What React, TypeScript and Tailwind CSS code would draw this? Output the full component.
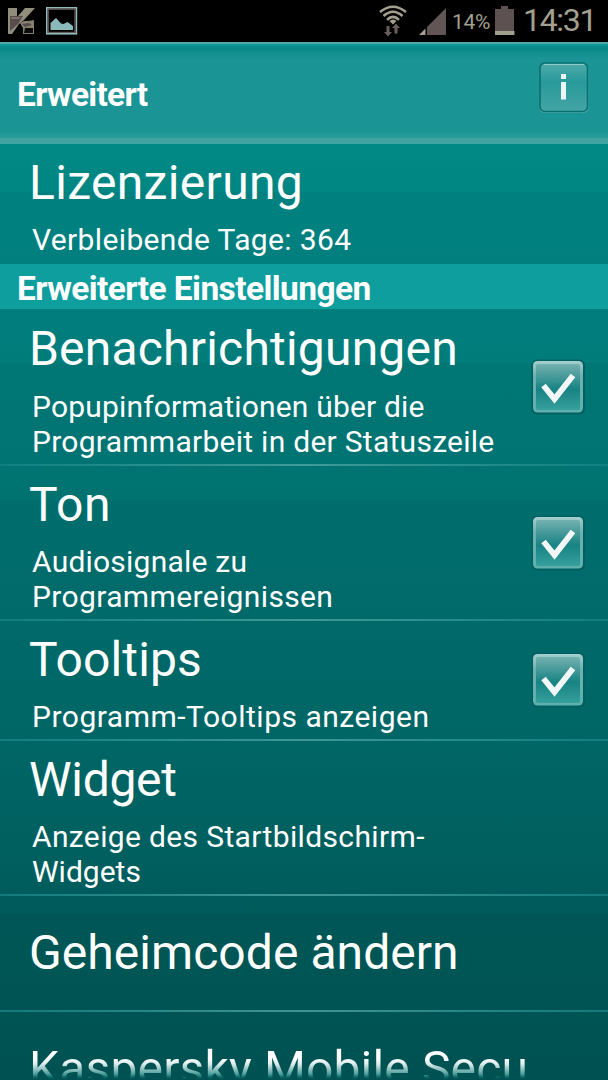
interface Line {
  text: string
  className: string
}

interface Setting {
  title: Line
  summary: Line[]
  rowClass: string
  titlePad: string
  checked?: boolean
}

const settings: Setting[] = [
  {
    title: { text: 'Benachrichtigungen', className: 'tracking-[0.2px]' },
    summary: [
      { text: 'Popupinformationen über die', className: 'tracking-[0.17px]' },
      { text: 'Programmarbeit in der Statuszeile', className: 'tracking-[0.27px]' },
    ],
    rowClass: 'h-[157px]',
    titlePad: 'pt-[12px] gap-[12px]',
    checked: true,
  },
  {
    title: { text: 'Ton', className: 'tracking-[0.6px]' },
    summary: [
      { text: 'Audiosignale zu', className: 'tracking-[0.22px]' },
      { text: 'Programmereignissen', className: 'tracking-[0.36px]' },
    ],
    rowClass: 'h-[155px]',
    titlePad: 'pt-[11px] gap-[11px]',
    checked: true,
  },
  {
    title: { text: 'Tooltips', className: 'tracking-[0.15px]' },
    summary: [{ text: 'Programm-Tooltips anzeigen', className: 'tracking-[0.5px]' }],
    rowClass: 'h-[120px]',
    titlePad: 'pt-[11px] gap-[11px]',
    checked: true,
  },
  {
    title: { text: 'Widget', className: 'tracking-[-0.3px]' },
    summary: [
      { text: 'Anzeige des Startbildschirm-', className: 'tracking-[0.36px]' },
      { text: 'Widgets', className: 'tracking-normal' },
    ],
    rowClass: 'h-[155px]',
    titlePad: 'pt-[11px] gap-[11px]',
  },
]

function StatusBar() {
  return (
    <div className="flex h-[42px] shrink-0 items-start bg-black text-[#a3a08f]">
      {/* Antivirus notification */}
      <svg className="mt-[7px] ml-2 h-7 w-7" viewBox="0 0 28 28">
        <path d="M0 1h9v8h1l7-8h10L16 13l-5 4-7 10H0z" fill="#918d7c" />
        <path d="M2 9h13l-5 8-8 7z" fill="#574c4c" />
        <path d="M3 10h10l-2 2H3z" fill="#7b7369" />
        <path d="M12 16l4-2h4l6-1v14H15v-6z" fill="#857f70" />
        <path d="M14 17l7-1 3 2-7 2z" fill="#574c4c" />
        <path d="M17 21h8v5h-9z" fill="#0c0a0a" />
      </svg>
      {/* Picture notification */}
      <svg className="mt-[7px] ml-[10px] h-7 w-8" viewBox="0 0 32 28">
        <rect x="0.800" y="0.800" width="29.600" height="26" fill="none" stroke="#8ebcbd" strokeWidth="1.600" />
        <rect x="2.200" y="2.200" width="26.800" height="23.200" fill="none" stroke="#6b5c5d" strokeWidth="1.200" />
        <path d="M4.500 23v-7l5.500-5 5 5.500 2.500.5 4-2 5.500 4v4z" fill="#8ab9ba" />
      </svg>
      <svg className="mt-[5px] ml-[301px] h-8 w-7" viewBox="0 0 28 32">
        <g fill="none" stroke="#a3a08f" strokeWidth="2.600">
          <path d="M1 7Q14-3.500 27 7" />
          <path d="M4.500 11Q14 2.500 23.500 11" />
          <path d="M8 14.800Q14 8.800 20 14.800" />
        </g>
        <path d="M10.500 16q3.500-3 7 0L14 19.500z" fill="#a3a08f" />
        <path d="M7.500 21h3v6H13l-4 4.500L5 27h2.500zM15.500 28.500v-5.500H13l4-4.500 4 4.500h-2.500v5.500z" fill="#6a5f5c" />
      </svg>
      <svg className="mt-2 ml-3 h-7 w-7" viewBox="0 0 28 28">
        <path d="M8 19L27 0v27H8z" fill="#615555" />
        <path d="M0 27l6.500-6.500V27z" fill="#a3a08f" />
      </svg>
      <span className="mt-[10px] ml-[5px] w-[43px] text-[21px] leading-[25px] tracking-[-0.3px] whitespace-nowrap">
        14%
      </span>
      <svg className="mt-[6px] h-[30px] w-5" viewBox="0 0 20 30">
        <path d="M6 0h7v3h6v22H0V3h6z" fill="#5d5151" />
        <path d="M0 25h19.500v4H0z" fill="#a3a08f" />
      </svg>
      <span className="mt-[1px] ml-[8px] text-[32px] leading-[38px] tracking-[-1.3px] whitespace-nowrap">14:31</span>
    </div>
  )
}

function Header() {
  return (
    <header className="flex h-[102px] shrink-0 justify-between border-t-2 border-b-[6px] border-t-[#4fa9a9] border-b-[#43a3a3] bg-[linear-gradient(#119a9a_0px,#058686_4px,#118e8e_8px,#1a9494_14px,#1a9494_86px,#279a9a_92px)] pr-[19px] pl-[17px]">
      <h1 className="mt-[31px] text-[33.5px] leading-[40px] font-bold tracking-[-0.7px]">Erweitert</h1>
      <svg className="mt-[17px] h-[54px] w-[50px]" viewBox="0 0 50 54">
        <defs>
          <linearGradient id="info" x1="0" y1="0" x2="0" y2="1">
            <stop offset="0" stopColor="#50aaaa" />
            <stop offset="0.4" stopColor="#289a9a" />
            <stop offset="1" stopColor="#45a5a4" />
          </linearGradient>
        </defs>
        <rect x="0.500" y="4" width="49" height="48" rx="5" fill="#4caaa9" />
        <rect x="1" y="2" width="47.500" height="48.500" rx="5" fill="url(#info)" stroke="#08706f" strokeWidth="1.600" />
        <path d="M5 3.500h40" stroke="#8fc9c8" strokeWidth="1" />
        <path d="M22 13h5v5h-5zM22 21h5v17.500h-5z" fill="#edf6f6" />
      </svg>
    </header>
  )
}

function Divider() {
  return (
    <div className="h-0.5 shrink-0 bg-[linear-gradient(90deg,#148484,#4fa5a3_50%,#148484)] opacity-80" />
  )
}

function Checkbox() {
  return (
    <svg className="h-14 w-[54px] shrink-0" viewBox="0 0 54 56">
      <defs>
        <linearGradient id="edge" x1="0" y1="0" x2="0" y2="1">
          <stop offset="0" stopColor="#a5cfce" />
          <stop offset="0.3" stopColor="#6db0af" />
          <stop offset="1" stopColor="#5fb0ad" />
        </linearGradient>
        <linearGradient id="face" x1="0" y1="0" x2="0" y2="1">
          <stop offset="0" stopColor="#74b1b0" />
          <stop offset="0.55" stopColor="#178383" />
          <stop offset="1" stopColor="#35a09c" />
        </linearGradient>
      </defs>
      <rect x="0.500" y="0.500" width="53.500" height="55" rx="6" fill="#005f60" />
      <rect x="2" y="2" width="50" height="51.500" rx="4.500" fill="url(#edge)" />
      <rect x="5" y="5" width="44" height="46" rx="2" fill="url(#face)" />
      <path d="M12.500 26.500L23.500 40L42 16.500" fill="none" stroke="#f2f6f6" strokeWidth="5.800" />
    </svg>
  )
}

function Row({ item }: { item: Setting }) {
  return (
    <section className={`flex shrink-0 flex-col ${item.rowClass}`}>
      <div className="flex min-h-0 flex-1 items-center justify-between pr-[23px] pl-[29px]">
        <div className={`flex h-full flex-col ${item.titlePad}`}>
          <h2 className={`text-[48px] leading-[56px] whitespace-nowrap ${item.title.className}`}>
            {item.title.text}
          </h2>
          <div className="ml-[3px] text-[30px] leading-[35px] whitespace-nowrap">
            {item.summary.map(line => (
              <p key={line.text} className={line.className}>{line.text}</p>
            ))}
          </div>
        </div>
        {item.checked && <Checkbox />}
      </div>
      <Divider />
    </section>
  )
}

export default function App() {
  return (
    <div className="flex h-[1080px] w-[608px] flex-col overflow-hidden bg-[linear-gradient(#008985_144px,#008683_192px,#008180_192px,#007c7b_363px,#007675_363px,#007371_500px,#006e6d_500px,#006464_775px,#005b5b_913px,#005656_914px,#005252)] font-[Roboto,sans-serif] text-white">
      <StatusBar />
      <Header />
      <section className="flex h-[120px] shrink-0 flex-col gap-[11px] pt-[11px] pl-[29px]">
        <h2 className="text-[48px] leading-[56px] tracking-[0.34px]">Lizenzierung</h2>
        <p className="ml-[3px] text-[30px] leading-[35.5px] tracking-[0.36px]">Verbleibende Tage: 364</p>
      </section>
      <div className="h-[45px] shrink-0 bg-[#0e9e9d] pl-[17px] text-[33.5px] leading-[50px] font-bold tracking-[-0.58px]">
        Erweiterte Einstellungen
      </div>
      {settings.map(item => (
        <Row key={item.title.text} item={item} />
      ))}
      <section className="flex h-[116px] shrink-0 flex-col">
        <h2 className="flex flex-1 items-center pl-[29px] text-[48px] leading-[56px] tracking-[0.06px]">
          Geheimcode ändern
        </h2>
        <Divider />
      </section>
      <section className="h-[68px] shrink-0 overflow-hidden pt-[29px] pl-[29px]">
        <h2 className="bg-[linear-gradient(#fff_17px,#dcecec_23px,#4b9c9a_33px,#0b6a6a_36px,#005252_38px)] bg-clip-text text-[48px] leading-[56px] tracking-[0.15px] whitespace-nowrap text-transparent">
          Kaspersky Mobile Secu
        </h2>
      </section>
    </div>
  )
}
